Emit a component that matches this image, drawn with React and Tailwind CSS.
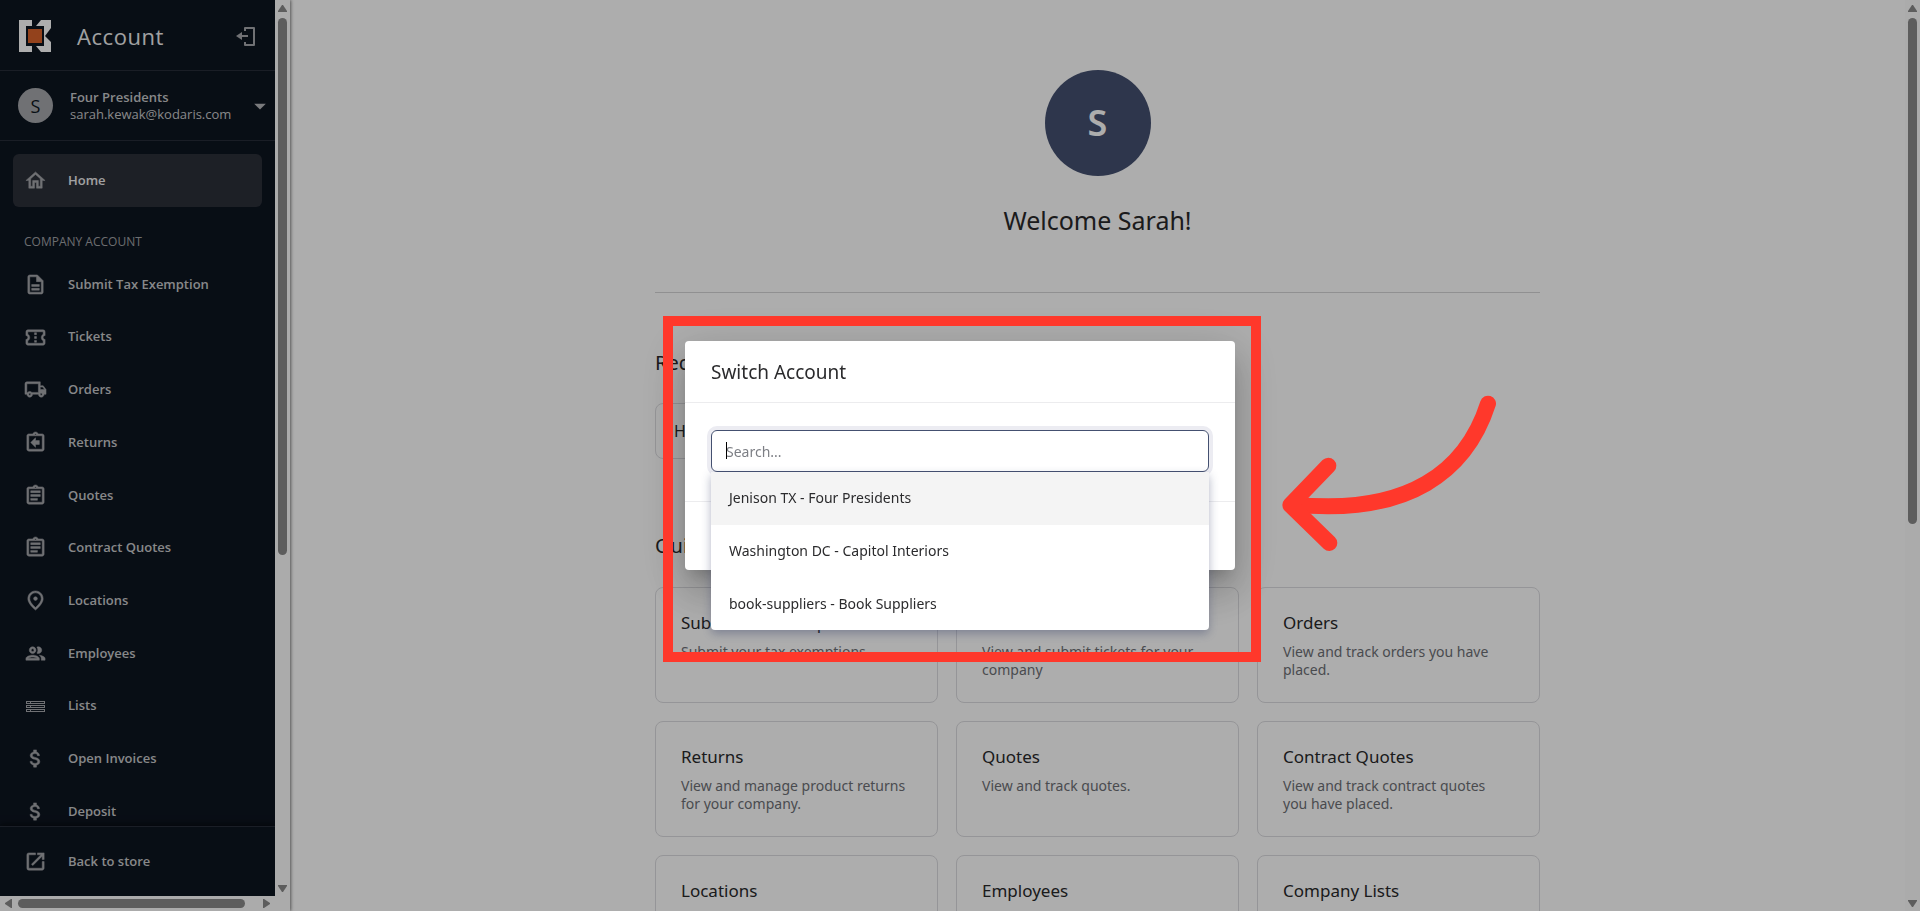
import { useState } from 'react';
import {
  MdOutlineHome,
  MdOutlineDescription,
  MdOutlineConfirmationNumber,
  MdOutlineLocalShipping,
  MdOutlineAssignmentReturn,
  MdOutlineAssignment,
  MdOutlinePlace,
  MdOutlinePeople,
  MdAttachMoney,
  MdOpenInNew,
  MdArrowDropDown,
} from 'react-icons/md';

const ListsIcon = ({ size, className }) => <svg width={size} height={size} viewBox="0 0 23 23" fill="none" stroke="currentColor" strokeWidth="1" className={className}>
  {[6.5, 10.5, 14.5].map((y) => <g key={y}><rect x="2.5" y={y} width="4" height="2" /><rect x="6.5" y={y} width="14" height="2" /></g>)}
</svg>;

const navItems = [
  { label: 'Submit Tax Exemption', icon: MdOutlineDescription },
  { label: 'Tickets', icon: MdOutlineConfirmationNumber },
  { label: 'Orders', icon: MdOutlineLocalShipping },
  { label: 'Returns', icon: MdOutlineAssignmentReturn },
  { label: 'Quotes', icon: MdOutlineAssignment },
  { label: 'Contract Quotes', icon: MdOutlineAssignment },
  { label: 'Locations', icon: MdOutlinePlace },
  { label: 'Employees', icon: MdOutlinePeople },
  { label: 'Lists', icon: ListsIcon },
  { label: 'Open Invoices', icon: MdAttachMoney },
  { label: 'Deposit', icon: MdAttachMoney },
];

const quickLinks = [
  { title: 'Submit Tax Exemption', text: 'Submit your tax exemptions.' },
  { title: 'Tickets', text: 'View and submit tickets for your company' },
  { title: 'Orders', text: 'View and track orders you have placed.' },
  { title: 'Returns', text: 'View and manage product returns for your company.' },
  { title: 'Quotes', text: 'View and track quotes.' },
  { title: 'Contract Quotes', text: 'View and track contract quotes you have placed.' },
  { title: 'Locations' },
  { title: 'Employees' },
  { title: 'Company Lists' },
];

const accounts = [
  'Jenison TX - Four Presidents',
  'Washington DC - Capitol Interiors',
  'book-suppliers - Book Suppliers',
];

const Logo = () => <svg width="33" height="33" viewBox="0 0 33 33" aria-label="Kodaris">
  <path fill="#fff" d="M0 0h13v6H7v20h6v6H0zM17 6l5-6h10v8l-6 8 6 6v10H22l-5-6h8V6z" />
  <rect x="9" y="9" width="14" height="14" fill="#d9622a" />
</svg>;

const LeaveIcon = () => <svg width="22" height="24" viewBox="0 0 22 24" fill="none" stroke="currentColor" strokeWidth="2" strokeLinejoin="round">
  <path d="M10 7V4h9v17h-9v-3M4 12h9" />
  <path fill="currentColor" stroke="none" d="M1 12l6-4v8z" />
</svg>;

const Arrow = ({ direction }) => <svg width="9" height="9" viewBox="0 0 9 9" className="shrink-0 fill-[#8a8a8a]">
  {direction === 'up' && <path d="M4 1h1l4 6v1H0V7z" />}
  {direction === 'down' && <path d="M0 1h9v1L5 8H4L0 2z" />}
  {direction === 'left' && <path d="M8 0v9H7L1 5V4l6-4z" />}
  {direction === 'right' && <path d="M1 0v9h1l6-4V4L2 0z" />}
</svg>;

const NavLink = ({ label, icon: Icon }) => <a href="#" className="flex items-center gap-[21px] px-6 text-[13px] font-semibold text-[#c8c9cb]">
  <Icon size={23} strokeWidth="0.5" className="text-[#a5a7ab] [&>path[fill=none]]:stroke-none" />{label}
</a>;

function Sidebar() {
  return <aside className="z-10 flex h-full shrink-0 font-['Open_Sans','Noto_Sans',sans-serif] shadow-[1px_0_3px_rgba(0,0,0,0.5)]">
    <div className="flex w-[275px] flex-col bg-[#0d1520]">
      <header className="flex h-[71px] shrink-0 items-center border-b border-[#272d38] pl-[19px] pr-[18px] pt-[2px] text-white">
        <Logo />
        <h1 className="ml-[25px] flex-1 text-[22px] tracking-wide text-[#eeeeef]">Account</h1>
        <button aria-label="Sign out" className="text-[#a5a7ab]"><LeaveIcon /></button>
      </header>
      <button className="flex h-[70px] shrink-0 items-center border-b border-[#272d38] pl-[18px] text-left text-[13px] leading-[17px] text-[#c8c9cb]">
        <span className="flex h-[35px] w-[35px] items-center justify-center rounded-full bg-[#a5a7ab] text-lg text-[#0d1520]">S</span>
        <span className="ml-[17px] flex-1"><span className="block font-semibold">Four Presidents</span><span className="block">sarah.kewak@kodaris.com</span></span>
        <MdArrowDropDown size={28} className="mr-px text-[#b4b5b8]" />
      </button>
      <nav className="min-h-0 flex-1 overflow-hidden">
        <a href="#" className="mx-[13px] mt-[13px] flex h-[53px] items-center gap-[21px] rounded-md bg-[#2c3039] px-[11px] text-[13px] font-semibold text-[#eeeeef]">
          <MdOutlineHome size={23} strokeWidth="0.5" className="text-[#a5a7ab] [&>path[fill=none]]:stroke-none" />Home
        </a>
        <h2 className="mt-[26px] px-6 pb-2 text-xs leading-[17px] text-[#a0a2a6]">COMPANY ACCOUNT</h2>
        <div className="grid h-[580px] auto-rows-fr">
          {navItems.map((item) => <NavLink key={item.label} {...item} />)}
        </div>
      </nav>
      <footer className="grid h-[70px] shrink-0 border-t border-[#272d38] shadow-[0_-2px_6px_rgba(0,0,0,0.5)]">
        <NavLink label="Back to store" icon={MdOpenInNew} />
      </footer>
      <div className="flex h-[15px] shrink-0 items-center bg-[#fcfcfc] px-1">
        <Arrow direction="left" />
        <div className="ml-[5px] h-[9px] w-[227px] rounded-full bg-[#8a8a8a]" />
        <div className="flex-1" />
        <Arrow direction="right" />
      </div>
    </div>
    <div className="flex w-[15px] flex-col items-center bg-[#fcfcfc] pb-[18px] pt-1">
      <Arrow direction="up" />
      <div className="mt-[5px] h-[537px] w-[9px] rounded-full bg-[#8a8a8a]" />
      <div className="flex-1" />
      <Arrow direction="down" />
    </div>
  </aside>;
}

function Home() {
  return <main className="h-full min-w-0 flex-1 overflow-hidden px-6">
    <div className="mx-auto max-w-[885px] pt-[70px] text-[#28282a]">
      <div className="mx-auto flex h-[106px] w-[106px] items-center justify-center rounded-full bg-[#445070] text-4xl font-semibold text-white">S</div>
      <h1 className="mt-[27px] border-b border-[#d4d4d6] pb-[55px] text-center text-[25px] leading-[34px]">Welcome Sarah!</h1>
      <h2 className="mt-[56px] text-xl leading-7">Recently Viewed</h2>
      <a href="#" className="mt-[26px] flex h-[56px] w-[180px] items-center rounded-lg border border-[#dcdce0] px-[18px] text-base">Home</a>
      <h2 className="mt-[73px] text-xl leading-7">Quick Links</h2>
      <div className="mt-[27px] grid grid-cols-3 gap-[18px]">
        {quickLinks.map(({ title, text }) => <a href="#" key={title} className="h-[116px] rounded-lg border border-[#dcdce0] pl-[25px] pr-[29px] pt-[23px]">
          <h3 className="text-[17px] leading-6">{title}</h3>
          <p className="mt-2 text-sm leading-[18px] text-[#6d6f75]">{text}</p>
        </a>)}
      </div>
    </div>
  </main>;
}

// Red frame and arrow pointing at the dialog
const Callout = () => <>
  <div className="pointer-events-none absolute -bottom-[92px] -left-[22px] -right-[26px] -top-[25px] border-10 border-[#ff382b]" />
  <svg className="pointer-events-none absolute left-[565px] top-[29px]" width="270" height="200" viewBox="0 0 810 600" fill="none" stroke="#ff382b" strokeWidth="48" strokeLinecap="round" strokeLinejoin="round">
    <path d="M714 101C650 300 480 440 125 403" />
    <path d="M235 287L121 405L238 519" />
  </svg>
</>;

function SwitchAccountDialog() {
  const [query, setQuery] = useState('');
  const matches = accounts.filter((account) => account.toLowerCase().includes(query.toLowerCase()));

  return <div className="fixed inset-0 z-20 flex items-center justify-center bg-black/32">
    <section role="dialog" aria-label="Switch Account" className="relative w-[550px] rounded bg-white text-[#2b2b2d] shadow-[0_11px_15px_-7px_rgba(0,0,0,0.2),0_24px_38px_3px_rgba(0,0,0,0.14),0_9px_46px_8px_rgba(0,0,0,0.12)]">
      <h2 className="border-b border-[#ececee] px-[26px] pb-4 pt-[18px] text-[19px] leading-[27px]">Switch Account</h2>
      <div className="border-b border-[#ececee] px-[26px] pb-[29px] pt-[27px]">
        <div className="relative">
          <input aria-label="Search accounts" value={query} onChange={(event) => setQuery(event.target.value)} placeholder="Search..." className="block h-[42px] w-full rounded-md border border-[#445070] px-[14px] text-sm shadow-[0_0_0_4px_#ececf2] outline-none placeholder:text-[#7d7f85]" />
          {!query && <span className="absolute left-[15px] top-3 h-[17px] w-px bg-black" />}
          <ul className="absolute inset-x-0 top-full grid h-[158px] auto-rows-fr overflow-hidden rounded-b bg-white shadow-[0_4px_10px_rgba(60,70,110,0.4)]">
            {matches.map((account, index) => <li key={account} className={`grid ${index === 0 ? 'bg-[#f4f4f4]' : ''}`}>
              <button className="px-[18px] text-left text-sm">{account}</button>
            </li>)}
          </ul>
        </div>
      </div>
      <div className="h-[68px]" />
      <Callout />
    </section>
  </div>;
}

export default function App() {
  return <div className="flex h-screen overflow-hidden bg-white font-['Noto_Sans','Open_Sans',sans-serif]">
    <Sidebar />
    <Home />
    <div className="flex w-[15px] shrink-0 flex-col items-center bg-[#fcfcfc] pb-[3px] pt-1">
      <Arrow direction="up" />
      <div className="mt-[5px] h-[56%] w-[9px] rounded-full bg-[#8a8a8a]" />
      <div className="flex-1" />
      <Arrow direction="down" />
    </div>
    <SwitchAccountDialog />
  </div>;
}
